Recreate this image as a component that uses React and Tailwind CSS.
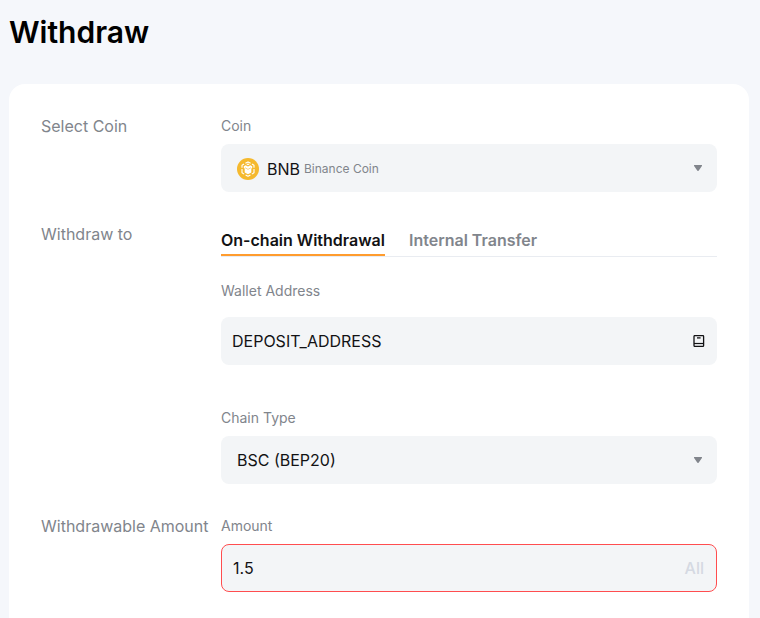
import React, { useState } from "react";

const coins = [
  { symbol: "BNB", name: "Binance Coin" },
  { symbol: "BTC", name: "Bitcoin" },
  { symbol: "ETH", name: "Ethereum" },
];

const chains = ["BSC (BEP20)", "BNB Beacon Chain (BEP2)"];

const tabs = ["On-chain Withdrawal", "Internal Transfer"];

const CoinIcon = () => (
  <svg viewBox="0 0 22 22" className="size-[22px] shrink-0" aria-hidden="true">
    <circle cx="11" cy="11" r="11" fill="#f5b92e" />
    <path
      d="M8.400 5.300 11 3.900l2.600 1.400M14.900 6l2.100 1.200v2.500M17 11v3.800l-2.200 1.300M13.400 16.900 11 18.200l-2.400-1.300M7.200 16.100 5 14.800V11M5 9.700V7.200L7.100 6"
      fill="none"
      stroke="#fff"
      strokeWidth="1.100"
      strokeLinejoin="round"
    />
    <path
      d="M6.800 8.300 8.600 7.300 11 8.600l2.400-1.300 1.800 1v1.800l-.9.500v3.800L11 16.300l-3.300-1.900v-3.800l-.9-.5zM9.300 6.300 11 5.400l1.700.9-1.700.9z"
      fill="#fff"
    />
    <path
      d="m8 9.700 3 1.700 3-1.700"
      fill="none"
      stroke="#f5b92e"
      strokeWidth=".6"
    />
  </svg>
);

const Caret = () => (
  <svg
    viewBox="0 0 8 6"
    className="pointer-events-none h-1.5 w-2 shrink-0"
    aria-hidden="true"
  >
    <path
      d="M.5 0h7c.5 0 .7.6.4 1L4.800 5.500a1 1 0 0 1-1.600 0L.1 1C-.2.6 0 0 .5 0z"
      fill="#81858c"
    />
  </svg>
);

const BookIcon = () => (
  <svg viewBox="0 0 12 12" className="size-3" fill="none" aria-hidden="true">
    <rect x="1" y=".6" width="9.600" height="10.800" rx=".8" stroke="#121214" strokeWidth="1.300" />
    <path d="M1 8.500h9.600" stroke="#121214" strokeWidth="1.200" />
    <path d="M4 2.900h3.600" stroke="#121214" strokeWidth="1.300" />
  </svg>
);

const Row = ({ title, children }) => (
  <section className="flex">
    <h2 className="w-[180px] shrink-0 text-base leading-5 text-[#81858c]">
      {title}
    </h2>
    <div className="min-w-0 flex-1">{children}</div>
  </section>
);

const Label = ({ htmlFor, children }) => (
  <label htmlFor={htmlFor} className="block text-sm leading-5 text-[#81858c]">
    {children}
  </label>
);

const App = () => {
  const [coin, setCoin] = useState("BNB");
  const [tab, setTab] = useState(tabs[0]);
  const [address, setAddress] = useState("DEPOSIT_ADDRESS");
  const [chain, setChain] = useState(chains[0]);
  const [amount, setAmount] = useState("1.5");

  const coinName = coins.find((c) => c.symbol === coin).name;

  return (
    <div className="flex min-h-screen flex-col bg-[#f5f7fb] pt-3 pr-[11px] pl-[9px] font-['Inter',sans-serif] text-[#121214]">
      <h1 className="mb-8 text-3xl leading-10 font-semibold text-black">
        Withdraw
      </h1>

      <main className="flex flex-1 flex-col gap-8 rounded-t-2xl bg-white px-8 pt-8 pb-6">
        <Row title="Select Coin">
          <Label htmlFor="coin">Coin</Label>
          <div className="mt-2 flex h-12 items-center rounded-lg bg-[#f3f5f7] pr-[15px] pl-4">
            <div className="flex flex-1 items-center pt-0.5">
              <CoinIcon />
              <select
                id="coin"
                value={coin}
                onChange={(e) => setCoin(e.target.value)}
                className="ml-2 field-sizing-content cursor-pointer appearance-none text-base outline-none"
              >
                {coins.map((c) => (
                  <option key={c.symbol}>{c.symbol}</option>
                ))}
              </select>
              <span className="ml-1 text-xs text-[#81858c]">{coinName}</span>
            </div>
            <Caret />
          </div>
        </Row>

        <Row title="Withdraw to">
          <div role="tablist" className="flex gap-6 border-b border-[#e9ecf1]">
            {tabs.map((name) => (
              <button
                key={name}
                role="tab"
                aria-selected={tab === name}
                onClick={() => setTab(name)}
                className={`h-8 cursor-pointer border-b-2 pt-0.5 text-base leading-7 font-semibold ${
                  tab === name
                    ? "border-[#ff9c2e]"
                    : "border-transparent text-[#81858c]"
                }`}
              >
                {name}
              </button>
            ))}
          </div>

          <div className="mt-6">
            <Label htmlFor="address">Wallet Address</Label>
            <div className="mt-4 flex h-12 items-center rounded-lg bg-[#f3f5f7] pr-3 pl-[11px]">
              <input
                id="address"
                type="text"
                value={address}
                onChange={(e) => setAddress(e.target.value)}
                className="min-w-0 flex-1 text-base outline-none"
              />
              <button aria-label="Address book" className="cursor-pointer">
                <BookIcon />
              </button>
            </div>
          </div>

          <div className="mt-[43px]">
            <Label htmlFor="chain">Chain Type</Label>
            <div className="mt-2 flex h-12 items-center rounded-lg bg-[#f3f5f7] pr-[15px] pl-4">
              <select
                id="chain"
                value={chain}
                onChange={(e) => setChain(e.target.value)}
                className="min-w-0 flex-1 cursor-pointer appearance-none text-base outline-none"
              >
                {chains.map((c) => (
                  <option key={c}>{c}</option>
                ))}
              </select>
              <Caret />
            </div>
          </div>
        </Row>

        <Row title="Withdrawable Amount">
          <Label htmlFor="amount">Amount</Label>
          <div className="mt-2 flex h-12 items-center rounded-lg border border-[#ff4d4f] bg-[#f3f5f7] pr-3 pl-[11px]">
            <input
              id="amount"
              type="text"
              inputMode="decimal"
              value={amount}
              onChange={(e) => setAmount(e.target.value)}
              className="min-w-0 flex-1 text-base outline-none"
            />
            <button className="text-base font-medium text-[#d5d9e2]">All</button>
          </div>
        </Row>
      </main>
    </div>
  );
};

export default App;
